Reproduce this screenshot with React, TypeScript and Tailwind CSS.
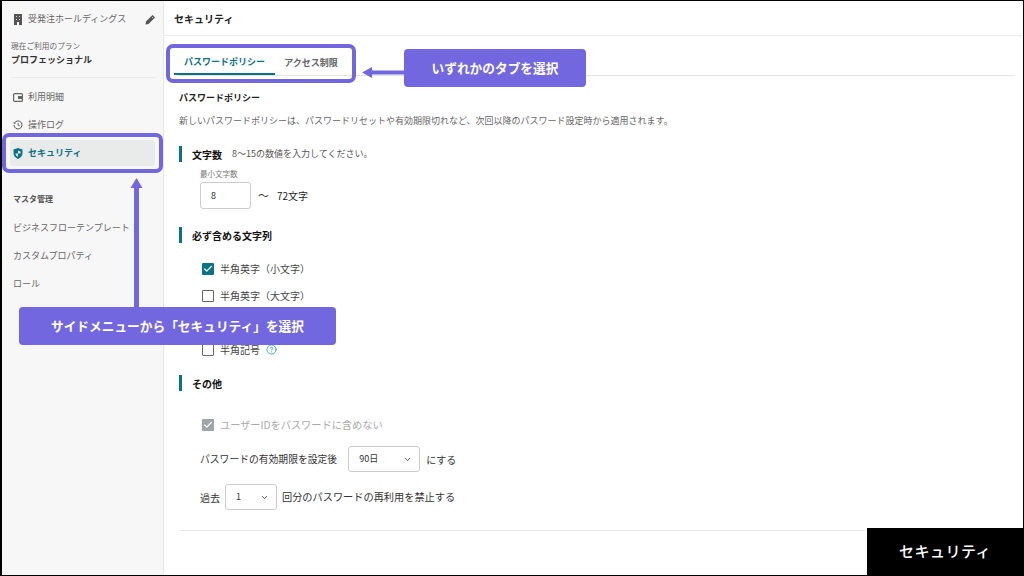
import { Check, ChevronDown, CircleHelp } from "lucide-react";
import type { ReactNode } from "react";

function BuildingIcon() {
  return (
    <svg className="ml-[3px] shrink-0" width="8" height="11" viewBox="0 0 8 11">
      <path d="M0 0H8V11H5V8H3V11H0Z" fill="#555" />
      <path d="M2 2H3V3H2ZM5 2H6V3H5ZM2 5H3V6H2ZM5 5H6V6H5Z" fill="#ddd" />
    </svg>
  );
}

function PencilIcon() {
  return (
    <svg className="shrink-0" width="11" height="11" viewBox="0 0 11 11">
      <path d="M0.5 10.5 L1 7.5 L7.5 1 L10 3.5 L3.5 10 Z" fill="#555" />
      <path d="M7 3 L8 4" stroke="#f7f7f7" strokeWidth="0.7" />
    </svg>
  );
}

function WalletIcon() {
  return (
    <svg className="shrink-0" width="10" height="9" viewBox="0 0 10 9">
      <rect x="0.6" y="0.6" width="8.8" height="7.8" rx="1" fill="none" stroke="#666" strokeWidth="1.2" />
      <rect x="5" y="3" width="4" height="3" fill="#666" />
    </svg>
  );
}

function ClockIcon() {
  return (
    <svg className="shrink-0" width="10" height="10" viewBox="0 0 10 10" fill="none" stroke="#555" strokeWidth="1">
      <path d="M1.4 3.2 A4 4 0 1 1 1 5" />
      <path d="M0.6 2.4 L1.3 3.6 L2.6 3.2" strokeWidth="0.8" />
      <path d="M5.2 3 V5.3 L6.8 6" strokeWidth="0.9" />
    </svg>
  );
}

function ShieldIcon() {
  return (
    <svg className="shrink-0" width="10" height="11" viewBox="0 0 10 11">
      <path d="M5 0 L9.5 1.6 V5 C9.5 8 7.5 10 5 11 C2.5 10 0.5 8 0.5 5 V1.6 Z" fill="#0a7286" />
      <path d="M5 2.6 L7.5 3.6 V5.4 H5 V8.8 C3.6 8.2 2.5 7 2.5 5.4 H5 Z" fill="#e9eaea" />
    </svg>
  );
}

function NavItem({ icon, label }: { icon?: ReactNode; label: string }) {
  return (
    <div className="flex h-7 items-center pl-[2px] text-[9px] text-[#666]">
      {icon && <span className="flex w-[15px] shrink-0 items-center">{icon}</span>}
      <span>{label}</span>
    </div>
  );
}

function SectionHead({ children }: { children: ReactNode }) {
  return (
    <div className="flex h-4 items-center gap-[10px] border-l-[3px] border-[#0a7286] pl-[10px]">
      {children}
    </div>
  );
}

function CheckRow({ label, checked, disabled, help }: { label: string; checked?: boolean; disabled?: boolean; help?: boolean }) {
  return (
    <div className="flex h-[27px] items-center gap-[6px] pl-[23px]">
      {checked ? (
        <span className={`flex h-3 w-3 items-center justify-center rounded-[1px] ${disabled ? "bg-[#9fa4a8]" : "bg-[#0a7286]"}`}>
          <Check className="h-[10px] w-[10px] text-white" strokeWidth={3} />
        </span>
      ) : (
        <span className="h-3 w-3 rounded-[1px] border-[1.5px] border-[#666]" />
      )}
      <span className={disabled ? "text-[10.2px] text-[#aaa]" : "text-[10px] text-[#444]"}>{label}</span>
      {help && <CircleHelp className="h-[11px] w-[11px] text-[#3ba0b5]" />}
    </div>
  );
}

function SelectBox({ value, width }: { value: string; width: string }) {
  return (
    <div className={`flex h-[26px] items-center justify-between rounded-[3px] border border-[#ccc] pl-[10px] pr-[7px] text-[9px] text-[#333] ${width}`}>
      <span>{value}</span>
      <ChevronDown className="h-[9px] w-[9px] text-[#444]" strokeWidth={2.5} />
    </div>
  );
}

export default function App() {
  return (
    <div className="relative flex h-[576px] w-[1024px] overflow-hidden border-y border-l-2 border-r border-black bg-white font-['Noto_Sans_CJK_JP','Noto_Sans',sans-serif]">
      <aside className="flex w-[162px] shrink-0 flex-col border-r border-[#e6e6e6] bg-[#f7f7f7] pl-[9px] pr-[6px]">
        <div className="flex h-[36px] items-center pr-[1px]">
          <BuildingIcon />
          <span className="ml-[6px] flex-1 text-[9px] text-[#666]">受発注ホールディングス</span>
          <PencilIcon />
        </div>
        <div className="mt-[3px] text-[7.7px] leading-[12px] text-[#666]">現在ご利用のプラン</div>
        <div className="mt-[1px] text-[9px] font-bold leading-[14px] text-[#333]">プロフェッショナル</div>
        <div className="mb-[5px] mr-[1px] mt-[10px] border-t border-[#ebebeb]" />
        <NavItem icon={<WalletIcon />} label="利用明細" />
        <NavItem icon={<ClockIcon />} label="操作ログ" />
        <div className="-ml-px mr-[2px] mt-[1px] flex h-[26px] items-center rounded-[3px] bg-[#e9eaea] pl-[3px] text-[9px] font-bold text-[#0a7286]">
          <span className="flex w-[15px] shrink-0 items-center">
            <ShieldIcon />
          </span>
          <span>セキュリティ</span>
        </div>
        <div className="mt-[27px] pl-[2px] text-[8px] font-bold leading-[12px] text-[#555]">マスタ管理</div>
        <div className="mt-[9px]">
          <NavItem label="ビジネスフローテンプレート" />
          <NavItem label="カスタムプロパティ" />
          <NavItem label="ロール" />
        </div>
      </aside>

      <main className="flex min-w-0 flex-1 flex-col">
        <header className="flex h-[35px] shrink-0 items-center border-b border-[#ececec] pl-[10px] text-[10px] font-bold text-[#222]">
          セキュリティ
        </header>
        <div className="flex flex-col pl-[15px] pr-[9px]">
          <div className="mt-[8px] flex h-[32px] border-b border-[#dfe3e3] text-[9px] font-bold">
            <div className="-ml-[5px] flex w-[101px] items-center justify-center border-b-2 border-[#0a7286] pt-[6px] text-[#0a7286]">パスワードポリシー</div>
            <div className="-ml-px flex w-[74px] items-center justify-center pt-[6px] text-[#666]">アクセス制限</div>
          </div>
          <h2 className="mt-[15px] text-[9px] font-bold leading-[14px] text-[#222]">パスワードポリシー</h2>
          <p className="mt-[9px] text-[9px] leading-[14px] text-[#666]">
            新しいパスワードポリシーは、パスワードリセットや有効期限切れなど、次回以降のパスワード設定時から適用されます。
          </p>
          <div className="mt-[18px]">
            <SectionHead>
              <span className="text-[10px] font-bold text-[#111]">文字数</span>
              <span className="text-[9px] text-[#555]">8〜15の数値を入力してください。</span>
            </SectionHead>
          </div>
          <div className="ml-[21px] mt-[6px] text-[7.5px] leading-[11px] text-[#777]">最小文字数</div>
          <div className="ml-[21px] mt-[3px] flex items-center">
            <div className="flex h-[27px] w-[51px] items-center rounded-[3px] border border-[#ccc] pl-[10px] text-[9px] text-[#333]">8</div>
            <span className="ml-[7px] text-[11px] text-[#333]">〜</span>
            <span className="ml-[8px] text-[10px] text-[#222]">72文字</span>
          </div>
          <div className="mt-[18px]">
            <SectionHead>
              <span className="text-[10px] font-bold text-[#111]">必ず含める文字列</span>
            </SectionHead>
          </div>
          <div className="mt-[12px]">
            <CheckRow label="半角英字（小文字）" checked />
            <CheckRow label="半角英字（大文字）" />
            <div className="h-[27px]" />
            <CheckRow label="半角記号" help />
          </div>
          <div className="mt-[12px]">
            <SectionHead>
              <span className="text-[10px] font-bold text-[#111]">その他</span>
            </SectionHead>
          </div>
          <div className="mt-[20px]">
            <CheckRow label="ユーザーIDをパスワードに含めない" checked disabled />
          </div>
          <div className="ml-[21px] mt-[8px] flex items-center text-[10px] text-[#333]">
            <span className="text-[9.8px]">パスワードの有効期限を設定後</span>
            <span className="ml-[11px]">
              <SelectBox value="90日" width="w-[72px]" />
            </span>
            <span className="ml-[6px]">にする</span>
          </div>
          <div className="ml-[21px] mt-[12px] flex items-center gap-[5px] text-[10px] text-[#333]">
            <span>過去</span>
            <SelectBox value="1" width="w-[52px]" />
            <span className="text-[10.2px]">回分のパスワードの再利用を禁止する</span>
          </div>
          <div className="mt-[20px] border-t border-[#ececec]" />
        </div>
      </main>

      {/* callouts over the page */}
      <div className="absolute left-0 top-[132px] h-[40px] w-[161px] rounded-[7px] border-[4px] border-[#7367e0]" />
      <div className="absolute left-[164px] top-[43px] h-[39px] w-[190px] rounded-[7px] border-[4px] border-[#7367e0]" />
      <div className="absolute left-[402px] top-[48px] flex h-[38px] w-[182px] items-center justify-center rounded-[4px] bg-[#7367e0] text-[12.7px] font-bold text-white">
        いずれかのタブを選択
      </div>
      <div className="absolute left-[17px] top-[306px] flex h-[38px] w-[317px] items-center justify-center rounded-[4px] bg-[#7367e0] text-[12.7px] font-bold text-white">
        サイドメニューから「セキュリティ」を選択
      </div>
      <svg className="absolute left-[360px] top-[65px]" width="42" height="13" viewBox="0 0 42 13">
        <path d="M0 6.5 L10 1 V4.5 H42 V8.5 H10 V12 Z" fill="#7367e0" />
      </svg>
      <svg className="absolute left-[128px] top-[177px]" width="13" height="130" viewBox="0 0 13 130">
        <path d="M6.5 0 L12.5 10 H9 V130 H4 V10 H0.5 Z" fill="#7367e0" />
      </svg>
      <div className="absolute bottom-0 right-0 flex h-[47px] w-[156px] items-center justify-center bg-black text-[15px] font-medium tracking-[0.5px] text-white">
        セキュリティ
      </div>
    </div>
  );
}
